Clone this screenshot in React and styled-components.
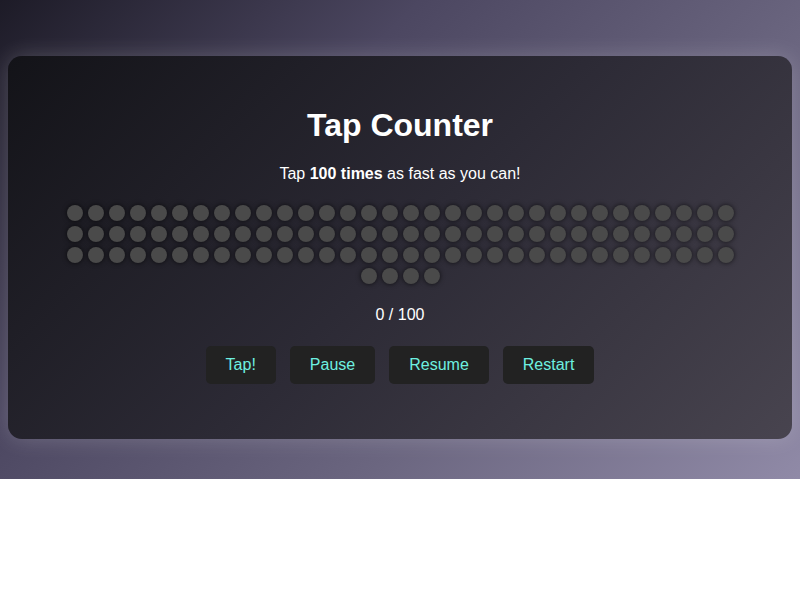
import React, { useState } from "react";
import styled, { createGlobalStyle } from "styled-components";

const GlobalStyle = createGlobalStyle`
  body {
    margin: 0;
    font-family: "Liberation Sans", Arial, sans-serif;
    background: #ffffff;
  }
`;

const TOTAL = 100;

export default function App() {
  const [count, setCount] = useState(0);
  const [paused, setPaused] = useState(false);

  const tap = () => {
    if (paused || count >= TOTAL) return;
    setCount(count + 1);
  };

  return (
    <Page>
      <GlobalStyle />
      <Card>
        <Title>Tap Counter</Title>
        <Subtitle>
          Tap <strong>100 times</strong> as fast as you can!
        </Subtitle>
        <DotGrid>
          {Array.from({ length: TOTAL }).map((_, i) => (
            <Dot key={i} $filled={i < count} />
          ))}
        </DotGrid>
        <Progress>
          {count} / {TOTAL}
        </Progress>
        <ButtonRow>
          <ActionButton onClick={tap}>Tap!</ActionButton>
          <ActionButton onClick={() => setPaused(true)}>Pause</ActionButton>
          <ActionButton onClick={() => setPaused(false)}>Resume</ActionButton>
          <ActionButton
            onClick={() => {
              setCount(0);
              setPaused(false);
            }}
          >
            Restart
          </ActionButton>
        </ButtonRow>
      </Card>
    </Page>
  );
}

const Page = styled.div`
  padding: 56px 8px 40px;
  background: linear-gradient(
    135deg,
    #1d1b27 0%,
    #4c4761 33%,
    #6b6680 66%,
    #908aa7 100%
  );
`;

const Card = styled.div`
  display: flex;
  flex-direction: column;
  align-items: center;
  padding: 51px 50px 55px;
  border-radius: 14px;
  background: linear-gradient(135deg, #131318 0%, #2c2a35 50%, #48444f 100%);
  box-shadow: 0 0 22px rgba(255, 255, 255, 0.18);
  color: #ffffff;
`;

const Title = styled.h1`
  margin: 0;
  font-size: 32px;
  line-height: 37px;
  font-weight: bold;
`;

const Subtitle = styled.p`
  margin: 21px 0 0;
  font-size: 16px;
  line-height: 18px;

  strong {
    font-weight: bold;
  }
`;

const DotGrid = styled.div`
  margin-top: 22px;
  max-width: 680px;
  display: flex;
  flex-wrap: wrap;
  justify-content: center;
  gap: 5px;
`;

const Dot = styled.span`
  width: 16px;
  height: 16px;
  border-radius: 50%;
  background: ${(p) => (p.$filled ? "#6ef0e0" : "#4a4a4a")};
  box-shadow: 0 0 5px rgba(0, 0, 0, 0.7);
`;

const Progress = styled.div`
  margin-top: 22px;
  font-size: 16px;
  line-height: 18px;
`;

const ButtonRow = styled.div`
  margin-top: 22px;
  display: flex;
  gap: 14px;
`;

const ActionButton = styled.button`
  height: 38px;
  padding: 0 20px;
  border: none;
  border-radius: 5px;
  background: #222222;
  color: #6ef0e0;
  font-family: "Liberation Sans", Arial, sans-serif;
  font-size: 16px;
  cursor: pointer;
`;
